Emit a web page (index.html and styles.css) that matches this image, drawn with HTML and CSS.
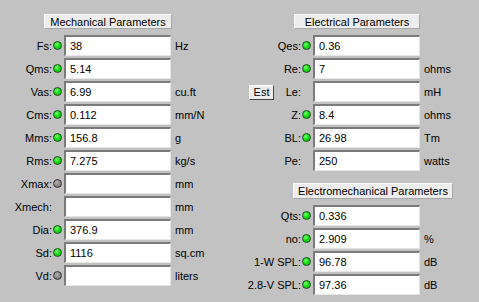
FILE: index.html
```html
<!DOCTYPE html>
<html lang="en">

<head>
    <meta charset="UTF-8" />
    <title>Driver Parameters</title>
    <link rel="stylesheet" href="styles.css">
</head>

<body>

    <div class="window">
        <!-- Colonne gauche -->
        <div class="panel panel-left">
            <div class="header header-mech">Mechanical Parameters</div>

            <div class="row"><span class="label">Fs:</span><span class="led on"></span><input class="field" value="38" /><span class="unit">Hz</span></div>
            <div class="row"><span class="label">Qms:</span><span class="led on"></span><input class="field" value="5.14" /><span class="unit"></span></div>
            <div class="row"><span class="label">Vas:</span><span class="led on"></span><input class="field" value="6.99" /><span class="unit">cu.ft</span></div>
            <div class="row"><span class="label">Cms:</span><span class="led on"></span><input class="field" value="0.112" /><span class="unit">mm/N</span></div>
            <div class="row"><span class="label">Mms:</span><span class="led on"></span><input class="field" value="156.8" /><span class="unit">g</span></div>
            <div class="row"><span class="label">Rms:</span><span class="led on"></span><input class="field" value="7.275" /><span class="unit">kg/s</span></div>
            <div class="row"><span class="label">Xmax:</span><span class="led off"></span><input class="field" value="" /><span class="unit">mm</span></div>
            <div class="row"><span class="label">Xmech:</span><span class="led none"></span><input class="field" value="" /><span class="unit">mm</span></div>
            <div class="row"><span class="label">Dia:</span><span class="led on"></span><input class="field" value="376.9" /><span class="unit">mm</span></div>
            <div class="row"><span class="label">Sd:</span><span class="led on"></span><input class="field" value="1116" /><span class="unit">sq.cm</span></div>
            <div class="row"><span class="label">Vd:</span><span class="led off"></span><input class="field" value="" /><span class="unit">liters</span></div>
        </div>

        <!-- Colonne droite -->
        <div class="panel panel-right">
            <div class="header header-elec">Electrical Parameters</div>

            <div class="row"><span class="label">Qes:</span><span class="led on"></span><input class="field" value="0.36" /><span class="unit"></span></div>
            <div class="row"><span class="label">Re:</span><span class="led on"></span><input class="field" value="7" /><span class="unit">ohms</span></div>
            <div class="row">
                <span class="label label-btn"><button class="est">Est</button><span>Le:</span></span><span class="led none"></span><input class="field" value="" /><span class="unit">mH</span>
            </div>
            <div class="row"><span class="label">Z:</span><span class="led on"></span><input class="field" value="8.4" /><span class="unit">ohms</span></div>
            <div class="row"><span class="label">BL:</span><span class="led on"></span><input class="field" value="26.98" /><span class="unit">Tm</span></div>
            <div class="row"><span class="label">Pe:</span><span class="led none"></span><input class="field" value="250" /><span class="unit">watts</span></div>

            <div class="header header-em">Electromechanical Parameters</div>

            <div class="row"><span class="label">Qts:</span><span class="led on"></span><input class="field" value="0.336" /><span class="unit"></span></div>
            <div class="row"><span class="label">no:</span><span class="led on"></span><input class="field" value="2.909" /><span class="unit">%</span></div>
            <div class="row"><span class="label">1-W SPL:</span><span class="led on"></span><input class="field" value="96.78" /><span class="unit">dB</span></div>
            <div class="row"><span class="label">2.8-V SPL:</span><span class="led on"></span><input class="field" value="97.36" /><span class="unit">dB</span></div>
        </div>
    </div>

</body>

</html>
```

FILE: styles.css
```css
body {
    margin: 0;
    background: #c2c2c2;
    font-family: "Liberation Sans", Arial, sans-serif;
    font-size: 11px;
    color: #000;
}

.window {
    display: flex;
    width: 479px;
    height: 302px;
}

.panel {
    padding-top: 14px;
}

.panel-left {
    width: 246px;
}

.panel-right {
    width: 233px;
}

/* Titres en forme de bouton plat */
.header {
    height: 15px;
    line-height: 14px;
    text-align: center;
    background: #ededed;
    border-top: 1px solid #fafafa;
    border-left: 1px solid #fafafa;
    border-right: 1px solid #a8a8a8;
    border-bottom: 1px solid #a8a8a8;
    box-sizing: border-box;
    margin-bottom: 6px;
}

.header-mech {
    margin-left: 44px;
    width: 128px;
}

.header-elec {
    margin-left: 48px;
    width: 126px;
}

.header-em {
    margin-left: 47px;
    width: 160px;
    height: 16px;
    margin-top: 12px;
}

.row {
    display: flex;
    align-items: center;
    height: 21px;
    margin-bottom: 2px;
}

.label {
    width: 52px;
    text-align: right;
    white-space: nowrap;
}

.panel-right .label {
    width: 55px;
}

.label-btn {
    display: flex;
    justify-content: space-between;
    align-items: center;
}

.led {
    width: 9px;
    height: 9px;
    margin: 0 2px 0 1px;
    border-radius: 50%;
    box-sizing: border-box;
}

.led.on {
    background: radial-gradient(circle at 40% 35%, #7dff7d 0, #12e012 45%, #00b400 100%);
    border: 1px solid #1f4a1f;
}

.led.off {
    background: radial-gradient(circle at 40% 35%, #b0b0b0 0, #8a8a8a 50%, #6c6c6c 100%);
    border: 1px solid #333;
}

.field {
    width: 107px;
    height: 21px;
    box-sizing: border-box;
    margin: 0;
    padding: 0 0 0 4px;
    font-family: inherit;
    font-size: 11px;
    color: #000;
    background: #fff;
    border-top: 2px solid #7b7b7b;
    border-left: 2px solid #7b7b7b;
    border-right: 1px solid #e6e6e6;
    border-bottom: 1px solid #e6e6e6;
    outline: none;
}

.unit {
    margin-left: 4px;
}

.panel-right .unit {
    margin-left: 4px;
}

.est {
    width: 25px;
    height: 15px;
    padding: 0;
    margin: 1px 0 0 3px;
    font-family: inherit;
    font-size: 11px;
    background: #ededed;
    border-top: 1px solid #fafafa;
    border-left: 1px solid #fafafa;
    border-right: 1px solid #444;
    border-bottom: 1px solid #444;
    box-sizing: border-box;
}
```
